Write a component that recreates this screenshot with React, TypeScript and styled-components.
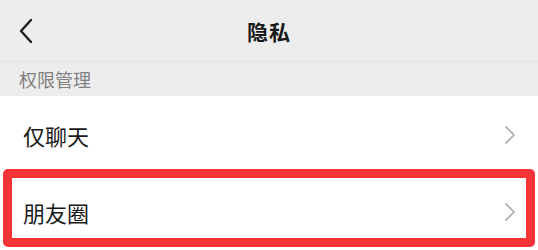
import React from "react";
import styled, { createGlobalStyle } from "styled-components";

const GlobalStyle = createGlobalStyle`
  html, body {
    margin: 0;
    padding: 0;
    background: #ededed;
    font-family: "Noto Sans CJK SC", "Noto Sans", sans-serif;
  }
`;

const Page = styled.main`
  width: 538px;
  height: 250px;
  overflow: hidden;
  display: flex;
  flex-direction: column;
  background: #ededed;
`;

const NavBar = styled.header`
  height: 62px;
  display: grid;
  grid-template-columns: 60px 1fr 60px;
  align-items: center;
  border-bottom: 1px solid #e3e3e3;
  box-sizing: border-box;
  h1 {
    margin: 0;
    text-align: center;
    font-size: 21px;
    font-weight: 600;
    color: #191919;
    letter-spacing: 1px;
  }
`;

const BackButton = styled.button`
  background: none;
  border: 0;
  padding: 0 0 0 18px;
  height: 62px;
  display: flex;
  align-items: center;
  cursor: pointer;
`;

const SectionTitle = styled.div`
  height: 35px;
  padding-left: 19px;
  display: flex;
  align-items: center;
  font-size: 18px;
  color: #808080;
`;

const List = styled.ul`
  list-style: none;
  margin: 0;
  padding: 0;
  background: #fff;
  flex: 1;
`;

const Row = styled.li`
  position: relative;
  height: 77px;
  padding: 0 22px 0 23px;
  display: flex;
  align-items: center;
  justify-content: space-between;
  font-size: 22px;
  color: #191919;
  box-sizing: border-box;
`;

const Highlight = styled.span`
  position: absolute;
  left: 3px;
  right: 3px;
  top: -4px;
  height: 78px;
  border: 9px solid #f43437;
  border-radius: 5px;
  box-sizing: border-box;
  pointer-events: none;
`;

const Chevron = () => (
  <svg width="12" height="20" viewBox="0 0 12 20" fill="none">
    <path d="M2 2l8 8-8 8" stroke="#b3b3b3" strokeWidth="1.8" strokeLinecap="round" strokeLinejoin="round" />
  </svg>
);

const rows = [
  { label: "仅聊天" },
  { label: "朋友圈", highlight: true },
];

export default function App() {
  return (
    <Page>
      <GlobalStyle />
      <NavBar>
        <BackButton aria-label="返回">
          <svg width="16" height="26" viewBox="0 0 16 26" fill="none">
            <path d="M13 2L3 13l10 11" stroke="#1f1f1f" strokeWidth="2.4" strokeLinecap="round" strokeLinejoin="round" />
          </svg>
        </BackButton>
        <h1>隐私</h1>
        <span />
      </NavBar>
      <SectionTitle>权限管理</SectionTitle>
      <List>
        {rows.map((r) => (
          <Row key={r.label}>
            <span>{r.label}</span>
            <Chevron />
            {r.highlight && <Highlight />}
          </Row>
        ))}
      </List>
    </Page>
  );
}
